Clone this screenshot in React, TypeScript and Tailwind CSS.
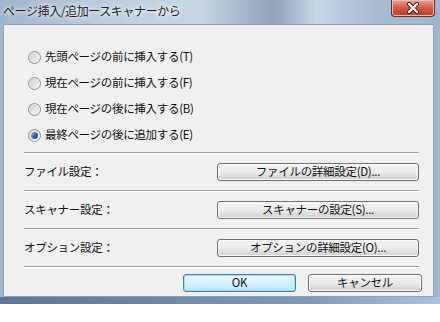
import React from "react";

const font = { fontFamily: '"Noto Sans CJK JP", "Noto Sans", sans-serif' };

function Radio({ checked, label }: { checked?: boolean; label: string }) {
  return (
    <div className="flex items-center h-[26px]">
      <div className="ml-[24px] w-[13px] h-[13px] rounded-full border border-[#8e8f8f] bg-gradient-to-br from-[#dcdcdc] to-[#f8f8f8] flex items-center justify-center shrink-0">
        {checked ? (
          <div className="w-[7px] h-[7px] rounded-full bg-gradient-to-br from-[#8fd0ff] via-[#2a6fb8] to-[#0c3f7c]" />
        ) : (
          <div className="w-[9px] h-[9px] rounded-full bg-gradient-to-br from-[#d0d0d0] to-[#f4f4f4]" />
        )}
      </div>
      <span className="ml-[4px] text-[11.5px] tracking-[-0.3px] text-[#111] leading-none">{label}</span>
    </div>
  );
}

function Sep() {
  return <div className="border-t border-t-[#a0a0a0] border-b border-b-white" />;
}

function Btn({ label, def, className }: { label: string; def?: boolean; className?: string }) {
  return (
    <div
      className={
        "h-[18px] rounded-[3px] border flex items-center justify-center text-[11.5px] tracking-[-0.3px] text-[#111] leading-none " +
        (def
          ? "border-[#3c7fb1] bg-gradient-to-b from-[#eaf6fd] via-[#d9f0fc] to-[#bee6fd] shadow-[inset_0_0_0_1px_#a6dbf5]"
          : "border-[#707070] bg-gradient-to-b from-[#f2f2f2] via-[#ebebeb] to-[#cfcfcf] shadow-[inset_0_0_0_1px_#fcfcfc]") +
        " " +
        (className || "")
      }
    >
      {label}
    </div>
  );
}

function Row({ label, btn }: { label: string; btn: string }) {
  return (
    <div className="flex items-center h-[36px] py-[9px]">
      <span className="text-[11.5px] tracking-[-0.3px] text-[#111] w-[193px]">{label}</span>
      <Btn label={btn} className="w-[202px]" />
    </div>
  );
}

export default function App() {
  return (
    <div className="w-[440px] h-[322px] bg-white" style={font}>
      <div className="w-[440px] h-[304px] flex flex-col bg-[linear-gradient(90deg,#9fb5c9_0%,#b7cadb_20%,#c9d7e4_45%,#8fa3b5_62%,#c6d6e5_72%,#a8bccf_85%,#9eb6cc_100%)]">
        <div className="h-[24px] flex items-start relative">
          <span className="ml-[3px] mt-[5px] text-[12px] tracking-[-0.4px] text-[#1e1e1e] leading-none [text-shadow:0_0_4px_#ffffff,0_0_6px_#ffffff]">
            ページ挿入/追加ースキャナーから
          </span>
          <div className="absolute left-[391px] top-0 w-[44px] h-[17px] rounded-b-[4px] border border-[#6b2a22] border-t-0 bg-gradient-to-b from-[#e8a594] via-[#cf5a45] to-[#c23a24] flex items-center justify-center shadow-[inset_0_0_0_1px_#eebcb1]">
            <svg width="14" height="12" viewBox="0 0 14 12">
              <path d="M3 2 L11 10 M11 2 L3 10" stroke="#4a1a14" strokeWidth="4.2" strokeLinecap="round" />
              <path d="M3 2 L11 10 M11 2 L3 10" stroke="#ffffff" strokeWidth="2.4" strokeLinecap="round" />
            </svg>
          </div>
        </div>
        <div className="ml-[3px] mr-[6px] h-[273px] bg-[#f0f0f0] border border-[#8da2b5] flex flex-col">
          <div className="pt-[19px] flex flex-col">
            <Radio label="先頭ページの前に挿入する(T)" />
            <Radio label="現在ページの前に挿入する(F)" />
            <Radio label="現在ページの後に挿入する(B)" />
            <Radio checked label="最終ページの後に追加する(E)" />
          </div>
          <div className="ml-[20px] mr-[14px] mt-[4px] flex flex-col">
            <Sep />
            <Row label="ファイル設定：" btn="ファイルの詳細設定(D)..." />
            <Sep />
            <Row label="スキャナー設定：" btn="スキャナーの設定(S)..." />
            <Sep />
            <Row label="オプション設定：" btn="オプションの詳細設定(O)..." />
            <Sep />
          </div>
          <div className="mt-[6px] flex justify-end pr-[11px] gap-[12px]">
            <Btn def label="OK" className="w-[113px]" />
            <Btn label="キャンセル" className="w-[114px]" />
          </div>
        </div>
        <div className="flex-1 bg-[linear-gradient(90deg,#5b7690_0%,#6f8aa3_40%,#7f9ab3_70%,#a9c4de_100%)]" />
      </div>
    </div>
  );
}
